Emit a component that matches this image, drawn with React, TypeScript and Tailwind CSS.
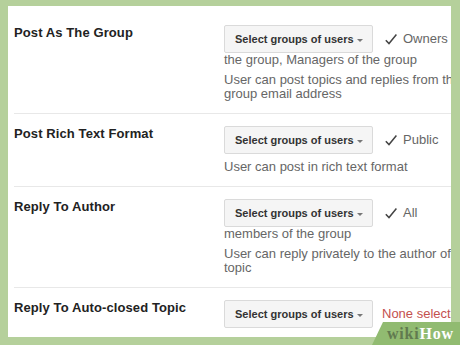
import React from "react";

const Check = () => (
  <svg width="12" height="11" viewBox="0 0 12 11" className="shrink-0">
    <path d="M0.8 6.2 L4 9.6 L11.4 0.6" fill="none" stroke="#444" strokeWidth="1.5" />
  </svg>
);

const Dropdown = () => (
  <div className="flex h-[28px] w-[149px] shrink-0 items-center justify-between rounded-[2px] border border-[#dadada] bg-[#f5f5f5] pl-[10px] pr-[9px]">
    <span className="text-[11px] font-bold text-[#333]">Select groups of users</span>
    <span className="mt-[2px] h-0 w-0 border-l-[3px] border-r-[3px] border-t-[3px] border-l-transparent border-r-transparent border-t-[#777]" />
  </div>
);

type RowProps = {
  title: string;
  value?: string;
  wrap?: string;
  desc?: string[];
  none?: boolean;
  last?: boolean;
};

const Row = ({ title, value, wrap, desc, none, last }: RowProps) => (
  <div className={`flex ${last ? "" : "border-b border-[#e8e8e8] pb-[12px]"}`}>
    <div className="w-[210px] shrink-0 pt-[10px] text-[13px] font-bold leading-[20px] tracking-[0.1px] text-[#222]">
      {title}
    </div>
    <div className="min-w-0 flex-1 whitespace-nowrap pt-[12px] text-[13px] leading-[14px] text-[#666]">
      <div className="flex items-center">
        <Dropdown />
        {none ? (
          <span className="ml-[9px] text-[#c4504e]">None selected</span>
        ) : (
          <>
            <span className="ml-[12px]">
              <Check />
            </span>
            <span className="ml-[6px]">{value}</span>
          </>
        )}
      </div>
      {wrap && <div>{wrap}</div>}
      {desc && (
        <div className="mt-[6px]">
          {desc.map((d) => (
            <div key={d}>{d}</div>
          ))}
        </div>
      )}
    </div>
  </div>
);

export default function App() {
  return (
    <div className="relative h-[345px] w-[460px] overflow-hidden bg-[#b5d09b] font-['Liberation_Sans',Arial,sans-serif]">
      <div className="ml-[8px] mt-[6px] h-[331px] w-[443px] overflow-hidden bg-white pl-[6px] pt-[7px]">
        <Row
          title="Post As The Group"
          value="Owners of"
          wrap="the group, Managers of the group"
          desc={["User can post topics and replies from the", "group email address"]}
        />
        <Row title="Post Rich Text Format" value="Public" desc={["User can post in rich text format"]} />
        <Row
          title="Reply To Author"
          value="All"
          wrap="members of the group"
          desc={["User can reply privately to the author of the", "topic"]}
        />
        <Row title="Reply To Auto-closed Topic" none last />
      </div>

      <div className="absolute bottom-0 right-0 h-[23px] w-[90px]">
        <svg width="90" height="23" viewBox="0 0 90 23" className="absolute inset-0">
          <polygon points="13,0 90,0 90,23 2,23" fill="#91bb71" />
        </svg>
        <div className="absolute bottom-[3px] left-[17px] font-['Liberation_Serif',serif] text-[16px] font-bold leading-[16px] tracking-[0.8px]">
          <span className="text-[#617a4f]">wiki</span>
          <span className="text-white">How</span>
        </div>
      </div>
    </div>
  );
}
